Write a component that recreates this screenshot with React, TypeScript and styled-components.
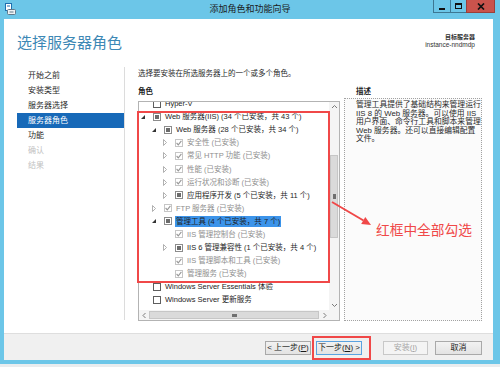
import React from 'react';
import styled, { createGlobalStyle } from 'styled-components';

const FRAME = '#6cc6e8';
const UI_FONT = '"Liberation Sans", "Noto Sans CJK SC", sans-serif';

const GlobalStyle = createGlobalStyle`
  html, body {
    margin: 0;
    padding: 0;
    background: ${FRAME};
  }
  body {
    font-family: ${UI_FONT};
    color: #1e1e1e;
  }
`;

type CheckState = 'none' | 'partial' | 'done';
type Expand = 'open' | 'closed' | 'leaf';

interface RoleRow {
  level: number;
  expand: Expand;
  check: CheckState;
  label: string;
  installed?: boolean;
  selected?: boolean;
}

const roles: RoleRow[] = [
  { level: 0, expand: 'leaf', check: 'none', label: 'Hyper-V' },
  { level: 0, expand: 'open', check: 'partial', label: 'Web 服务器(IIS) (34 个已安装，共 43 个)' },
  { level: 1, expand: 'open', check: 'partial', label: 'Web 服务器 (28 个已安装，共 34 个)' },
  { level: 2, expand: 'closed', check: 'done', label: '安全性 (已安装)', installed: true },
  { level: 2, expand: 'closed', check: 'done', label: '常见 HTTP 功能 (已安装)', installed: true },
  { level: 2, expand: 'closed', check: 'done', label: '性能 (已安装)', installed: true },
  { level: 2, expand: 'closed', check: 'done', label: '运行状况和诊断 (已安装)', installed: true },
  { level: 2, expand: 'closed', check: 'partial', label: '应用程序开发 (5 个已安装，共 11 个)' },
  { level: 1, expand: 'closed', check: 'done', label: 'FTP 服务器 (已安装)', installed: true },
  { level: 1, expand: 'open', check: 'partial', label: '管理工具 (4 个已安装，共 7 个)', selected: true },
  { level: 2, expand: 'leaf', check: 'done', label: 'IIS 管理控制台 (已安装)', installed: true },
  { level: 2, expand: 'closed', check: 'partial', label: 'IIS 6 管理兼容性 (1 个已安装，共 4 个)' },
  { level: 2, expand: 'leaf', check: 'done', label: 'IIS 管理脚本和工具 (已安装)', installed: true },
  { level: 2, expand: 'leaf', check: 'done', label: '管理服务 (已安装)', installed: true },
  { level: 0, expand: 'leaf', check: 'none', label: 'Windows Server Essentials 体验' },
  { level: 0, expand: 'leaf', check: 'none', label: 'Windows Server 更新服务' },
];

const steps = [
  { name: '开始之前' },
  { name: '安装类型' },
  { name: '服务器选择' },
  { name: '服务器角色', active: true },
  { name: '功能' },
  { name: '确认', disabled: true },
  { name: '结果', disabled: true },
];

const description = [
  '管理工具提供了基础结构来管理运行',
  'IIS 8 的 Web 服务器。可以使用 IIS',
  '用户界面、命令行工具和脚本来管理',
  'Web 服务器。还可以直接编辑配置',
  '文件。',
];

/* window chrome */

const Window = styled.div`
  position: relative;
  width: 500px;
  height: 367px;
  background: ${FRAME};
  display: flex;
  flex-direction: column;
  overflow: hidden;
`;

const TitleBar = styled.div`
  height: 19px;
  flex-shrink: 0;
  display: grid;
  grid-template-columns: 1fr auto 1fr;
  align-items: start;
`;

const AppIcon = styled.div`
  padding: 3px 0 0 5px;
  display: flex;
`;

const Title = styled.div`
  font-size: 9px;
  line-height: 18px;
  color: #1b1b1b;
`;

const Controls = styled.div`
  justify-self: end;
  display: flex;
  margin-right: 5px;
`;

const CtrlButton = styled.div<{ $w: number; $close?: boolean }>`
  width: ${(p) => p.$w}px;
  height: 13px;
  box-sizing: border-box;
  margin-left: -1px;
  border: 1px solid ${(p) => (p.$close ? '#9c3f39' : '#3d7793')};
  border-top: none;
  background: ${(p) => (p.$close ? '#c9534c' : 'transparent')};
  display: flex;
  align-items: center;
  justify-content: center;
`;

const MinGlyph = styled.span`
  width: 6px;
  height: 2px;
  background: #111;
  margin-top: 5px;
`;

const MaxGlyph = styled.span`
  width: 7px;
  height: 6px;
  box-sizing: border-box;
  border: 1px solid #111;
  border-top-width: 2px;
`;

const Client = styled.div`
  margin: 0 7px 0 4px;
  display: flex;
  flex-direction: column;
`;

const Content = styled.div`
  height: 314px;
  background: #fff;
  display: flex;
  flex-direction: column;
`;

const BottomFrame = styled.div`
  height: 4px;
  background: ${FRAME};
  border-bottom: 3px solid #e9ecee;
`;

/* header */

const Header = styled.div`
  height: 48px;
  flex-shrink: 0;
  display: flex;
  justify-content: space-between;
  align-items: flex-start;
  padding: 0 18px 0 13px;
`;

const PageTitle = styled.div`
  margin-top: 14px;
  font-size: 15px;
  line-height: 20px;
  color: #3d88b5;
`;

const Target = styled.div`
  margin-top: 14px;
  text-align: right;
  font-size: 6.5px;
  line-height: 8px;
  color: #333;
`;

const TargetLabel = styled.div`
  font-weight: bold;
  font-size: 6px;
`;

/* body */

const MainRow = styled.div`
  flex: 1;
  display: flex;
`;

const Nav = styled.div`
  width: 107px;
  margin-left: 13px;
  padding-top: 1px;
  display: flex;
  flex-direction: column;
`;

const NavItem = styled.div<{ $active?: boolean; $disabled?: boolean }>`
  height: 15px;
  line-height: 15px;
  padding-left: 11px;
  font-size: 8px;
  background: ${(p) => (p.$active ? '#1769b8' : 'transparent')};
  color: ${(p) => (p.$active ? '#fff' : p.$disabled ? '#c2c2c2' : '#2a2a2a')};
`;

const Divider = styled.div`
  width: 1px;
  background: #dcdcdc;
  margin-bottom: 13px;
`;

const Main = styled.div`
  flex: 1;
  padding: 0 11px 0 13px;
  display: flex;
  flex-direction: column;
`;

const Intro = styled.div`
  margin-top: 1px;
  font-size: 7.5px;
  line-height: 12px;
  color: #2a2a2a;
`;

const Columns = styled.div`
  margin-top: 6px;
  display: flex;
  gap: 4px;
`;

const RoleCol = styled.div`
  width: 202px;
  display: flex;
  flex-direction: column;
`;

const DescCol = styled.div`
  width: 138px;
  display: flex;
  flex-direction: column;
`;

const SectionLabel = styled.div<{ $indent?: number; $gap?: number }>`
  font-size: 7.5px;
  font-weight: bold;
  line-height: 12px;
  padding-left: ${(p) => p.$indent ?? 0}px;
  margin-bottom: ${(p) => p.$gap ?? 0}px;
  color: #1e1e1e;
`;

/* tree */

const TreeBox = styled.div`
  position: relative;
  height: 220px;
  box-sizing: border-box;
  border: 1px solid #b3b3b3;
  display: grid;
  grid-template-columns: 1fr 10px;
  grid-template-rows: 1fr 10px;
`;

const Viewport = styled.div`
  overflow: hidden;
`;

const RowList = styled.div`
  margin-top: -5px;
`;

const Row = styled.div<{ $level: number }>`
  height: 13.1px;
  display: flex;
  align-items: center;
  padding-left: ${(p) => p.$level * 11}px;
  white-space: nowrap;
`;

const Expander = styled.span`
  width: 7px;
  display: flex;
  align-items: center;
  justify-content: center;
  flex-shrink: 0;
`;

const Box = styled.span<{ $state: CheckState }>`
  width: 8px;
  height: 8px;
  box-sizing: border-box;
  margin: 0 4px 0 7px;
  flex-shrink: 0;
  border: 1px solid
    ${(p) => (p.$state === 'done' ? '#c6c6c6' : p.$state === 'partial' ? '#8c8c8c' : '#5e5e5e')};
  background: #fff;
  display: flex;
  align-items: center;
  justify-content: center;
`;

const PartialMark = styled.span`
  width: 4px;
  height: 4px;
  background: #6b6b6b;
`;

const RowLabel = styled.span<{ $installed?: boolean; $selected?: boolean }>`
  font-size: 7.5px;
  line-height: 11px;
  padding: 0 1px;
  margin-left: -1px;
  color: ${(p) => (p.$installed ? '#8e8e8e' : '#1e1e1e')};
  background: ${(p) => (p.$selected ? '#3c94ea' : 'transparent')};
`;

const VScroll = styled.div`
  background: #f4f4f4;
  display: flex;
  flex-direction: column;
  align-items: center;
`;

const HScroll = styled.div`
  background: #f4f4f4;
  display: flex;
  align-items: center;
`;

const Corner = styled.div`
  background: #f4f4f4;
`;

const ArrowCell = styled.div`
  width: 10px;
  height: 10px;
  flex-shrink: 0;
  display: flex;
  align-items: center;
  justify-content: center;
`;

const VThumb = styled.div`
  width: 8px;
  height: 83px;
  margin-top: 43px;
  box-sizing: border-box;
  border: 1px solid #c6c6c6;
  background: #dadada;
  display: flex;
  align-items: center;
  justify-content: center;
`;

const HThumb = styled.div`
  width: 170px;
  height: 8px;
  box-sizing: border-box;
  border: 1px solid #c6c6c6;
  background: #dadada;
  display: flex;
  align-items: center;
  justify-content: center;
`;

const Grip = styled.span<{ $vertical?: boolean }>`
  width: ${(p) => (p.$vertical ? '3px' : '5px')};
  height: ${(p) => (p.$vertical ? '5px' : '3px')};
  background: #6f6f6f;
`;

const Spacer = styled.div`
  flex: 1;
`;

const RedFrame = styled.div`
  position: absolute;
  left: -2px;
  top: 9px;
  width: 193px;
  height: 172px;
  box-sizing: border-box;
  border: 2px solid #f04848;
  pointer-events: none;
`;

/* description */

const DescBox = styled.div`
  height: 223px;
  box-sizing: border-box;
  border: 1px dotted #a2a2a2;
  background: #fbfbfb;
  padding: 2px 2px 0 11px;
  font-size: 7.8px;
  line-height: 8.5px;
  color: #2a2a2a;
`;

const DescLine = styled.div`
  white-space: nowrap;
`;

/* footer */

const Footer = styled.div`
  height: 27px;
  box-sizing: border-box;
  border-top: 1px solid #dedede;
  background: #f0f0f0;
  display: flex;
  justify-content: flex-end;
  align-items: flex-start;
  padding: 7px 11px 0 0;
`;

const ButtonWrap = styled.div<{ $gap: number }>`
  position: relative;
  margin-left: ${(p) => p.$gap}px;
  display: flex;
`;

const Button = styled.button<{ $w: number; $kind?: 'default' | 'disabled' }>`
  width: ${(p) => p.$w}px;
  height: 14px;
  padding: 0;
  box-sizing: border-box;
  font-family: ${UI_FONT};
  font-size: 8px;
  line-height: 12px;
  border: 1px solid
    ${(p) => (p.$kind === 'default' ? '#5aa2e0' : p.$kind === 'disabled' ? '#c8c8c8' : '#a9a9a9')};
  background: ${(p) =>
    p.$kind === 'disabled' ? '#f4f4f4' : 'linear-gradient(#f2f2f2, #e3e3e3)'};
  color: ${(p) => (p.$kind === 'disabled' ? '#a6a6a6' : '#1a1a1a')};
`;

const ButtonHighlight = styled.div`
  position: absolute;
  left: -4px;
  top: -5px;
  right: -9px;
  bottom: -5px;
  border: 2px solid #f04848;
  pointer-events: none;
`;

/* annotation */

const ArrowOverlay = styled.svg`
  position: absolute;
  left: 328px;
  top: 198px;
  pointer-events: none;
`;

const Note = styled.div`
  position: absolute;
  left: 376px;
  top: 220px;
  font-family: "Noto Sans CJK SC", sans-serif;
  font-size: 13.7px;
  line-height: 18px;
  color: #f04848;
  pointer-events: none;
`;

const Chevron = ({ dir }: { dir: 'up' | 'down' | 'left' | 'right' }) => {
  const d = {
    up: 'M1 4 L3.5 1.5 L6 4',
    down: 'M1 2 L3.5 4.5 L6 2',
    left: 'M4.5 1 L2 3.5 L4.5 6',
    right: 'M2.5 1 L5 3.5 L2.5 6',
  }[dir];
  return (
    <svg width="7" height="7" viewBox="0 0 7 7">
      <path d={d} fill="none" stroke="#7a7a7a" strokeWidth="1" />
    </svg>
  );
};

const TreeRow = ({ row }: { row: RoleRow }) => (
  <Row $level={row.level}>
    <Expander>
      {row.expand === 'open' && (
        <svg width="4" height="4" viewBox="0 0 4 4">
          <path d="M4 0 L4 4 L0 4 Z" fill="#333" />
        </svg>
      )}
      {row.expand === 'closed' && (
        <svg width="4" height="7" viewBox="0 0 4 7">
          <path d="M0.5 0.5 L3.5 3.5 L0.5 6.5 Z" fill="#fff" stroke="#a8a8a8" strokeWidth="0.9" />
        </svg>
      )}
    </Expander>
    <Box $state={row.check}>
      {row.check === 'partial' && <PartialMark />}
      {row.check === 'done' && (
        <svg width="6" height="6" viewBox="0 0 6 6">
          <path d="M0.6 3 L2.3 4.8 L5.4 0.9" fill="none" stroke="#979797" strokeWidth="1.1" />
        </svg>
      )}
    </Box>
    <RowLabel $installed={row.installed} $selected={row.selected}>
      {row.label}
    </RowLabel>
  </Row>
);

export default function App() {
  return (
    <>
      <GlobalStyle />
      <Window>
        <TitleBar>
          <AppIcon>
            <svg width="11" height="12" viewBox="0 0 11 12">
              <rect x="0.5" y="0.5" width="6" height="7" fill="#fff" stroke="#1f6fae" />
              <rect x="2" y="2.5" width="3" height="1" fill="#1f6fae" />
              <rect x="2.5" y="6.5" width="8" height="5" rx="1" fill="#eef2f5" stroke="#60788a" />
              <rect x="4.5" y="8.5" width="4" height="1" fill="#60788a" />
            </svg>
          </AppIcon>
          <Title>添加角色和功能向导</Title>
          <Controls>
            <CtrlButton $w={18}>
              <MinGlyph />
            </CtrlButton>
            <CtrlButton $w={17}>
              <MaxGlyph />
            </CtrlButton>
            <CtrlButton $w={29} $close>
              <svg width="8" height="7" viewBox="0 0 8 7">
                <path d="M1 0.5 L7 6.5 M7 0.5 L1 6.5" stroke="#111" strokeWidth="1.7" />
              </svg>
            </CtrlButton>
          </Controls>
        </TitleBar>

        <Client>
          <Content>
            <Header>
              <PageTitle>选择服务器角色</PageTitle>
              <Target>
                <TargetLabel>目标服务器</TargetLabel>
                <div>instance-nndmdp</div>
              </Target>
            </Header>

            <MainRow>
              <Nav>
                {steps.map((s) => (
                  <NavItem key={s.name} $active={s.active} $disabled={s.disabled}>
                    {s.name}
                  </NavItem>
                ))}
              </Nav>
              <Divider />
              <Main>
                <Intro>选择要安装在所选服务器上的一个或多个角色。</Intro>
                <Columns>
                  <RoleCol>
                    <SectionLabel $gap={3}>角色</SectionLabel>
                    <TreeBox>
                      <Viewport>
                        <RowList>
                          {roles.map((r) => (
                            <TreeRow key={r.label} row={r} />
                          ))}
                        </RowList>
                      </Viewport>
                      <VScroll>
                        <ArrowCell>
                          <Chevron dir="up" />
                        </ArrowCell>
                        <VThumb>
                          <Grip $vertical />
                        </VThumb>
                        <Spacer />
                        <ArrowCell>
                          <Chevron dir="down" />
                        </ArrowCell>
                      </VScroll>
                      <HScroll>
                        <ArrowCell>
                          <Chevron dir="left" />
                        </ArrowCell>
                        <HThumb>
                          <Grip />
                        </HThumb>
                        <Spacer />
                        <ArrowCell>
                          <Chevron dir="right" />
                        </ArrowCell>
                      </HScroll>
                      <Corner />
                      <RedFrame />
                    </TreeBox>
                  </RoleCol>
                  <DescCol>
                    <SectionLabel $indent={12}>描述</SectionLabel>
                    <DescBox>
                      {description.map((line) => (
                        <DescLine key={line}>{line}</DescLine>
                      ))}
                    </DescBox>
                  </DescCol>
                </Columns>
              </Main>
            </MainRow>
          </Content>

          <Footer>
            <ButtonWrap $gap={0}>
              <Button $w={46}>
                &lt; 上一步(<u>P</u>)
              </Button>
            </ButtonWrap>
            <ButtonWrap $gap={5}>
              <Button $w={46} $kind="default">
                下一步(<u>N</u>) &gt;
              </Button>
              <ButtonHighlight />
            </ButtonWrap>
            <ButtonWrap $gap={21}>
              <Button $w={45} $kind="disabled">
                安装(<u>I</u>)
              </Button>
            </ButtonWrap>
            <ButtonWrap $gap={7}>
              <Button $w={47}>取消</Button>
            </ButtonWrap>
          </Footer>
        </Client>
        <BottomFrame />

        <ArrowOverlay width="48" height="32" viewBox="0 0 48 32">
          <line x1="4" y1="4" x2="35.5" y2="22.5" stroke="#f04848" strokeWidth="2" />
          <polygon points="43,27 33.2,25.9 37.3,18.9" fill="#f04848" />
        </ArrowOverlay>
        <Note>红框中全部勾选</Note>
      </Window>
    </>
  );
}
